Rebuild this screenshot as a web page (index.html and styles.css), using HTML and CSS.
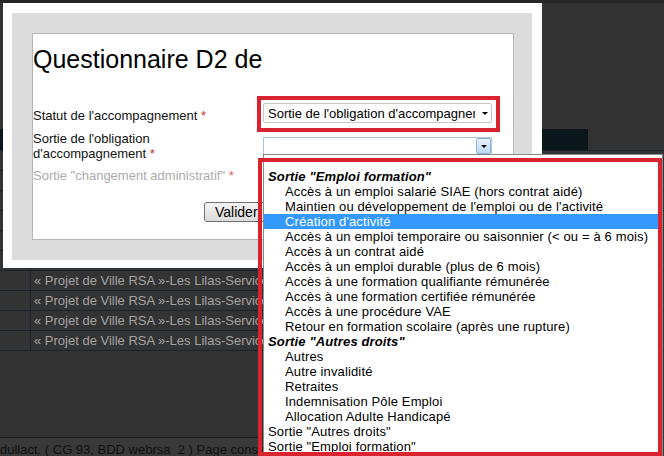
FILE: index.html
```
<!DOCTYPE html>
<html lang="fr">
<head>
<meta charset="utf-8">
<title>Questionnaire D2</title>
<link rel="stylesheet" href="styles.css">
</head>
<body>
<div class="page">
  <div class="page-top"></div>
  <div class="grid">
    <div class="grid-head"><div class="head-cell"></div></div>
    <div class="grid-row"><div class="c1"></div><div class="c2">« Projet de Ville RSA »-Les Lilas-Service RSA</div></div>
    <div class="grid-row"><div class="c1"></div><div class="c2">« Projet de Ville RSA »-Les Lilas-Service RSA</div></div>
    <div class="grid-row"><div class="c1"></div><div class="c2">« Projet de Ville RSA »-Les Lilas-Service RSA</div></div>
    <div class="grid-row"><div class="c1"></div><div class="c2">« Projet de Ville RSA »-Les Lilas-Service RSA</div></div>
    <div class="grid-row"><div class="c1"></div><div class="c2">« Projet de Ville RSA »-Les Lilas-Service RSA</div></div>
    <div class="grid-row"><div class="c1"></div><div class="c2">« Projet de Ville RSA »-Les Lilas-Service RSA</div></div>
    <div class="grid-row"><div class="c1"></div><div class="c2">« Projet de Ville RSA »-Les Lilas-Service RSA</div></div>
    <div class="grid-row"><div class="c1"></div><div class="c2">« Projet de Ville RSA »-Les Lilas-Service RSA</div></div>
    <div class="grid-row"><div class="c1"></div><div class="c2">« Projet de Ville RSA »-Les Lilas-Service RSA</div></div>
    <div class="grid-row"><div class="c1"></div><div class="c2">« Projet de Ville RSA »-Les Lilas-Service RSA</div></div>
  </div>
  <div class="page-gap"></div>
  <div class="foot">dullact. ( CG 93, BDD webrsa_2 ) Page construite en 1,04 secondes.</div>
</div>

<div class="dialog">
  <div class="dialog-frame">
    <div class="panel">
      <h1 class="title">Questionnaire D2 de</h1>
      <div class="field f1">
        <label class="lbl">Statut de l'accompagnement <span class="req">*</span></label>
        <div class="select sel-1"><span class="sel-text">Sortie de l'obligation d'accompagnement</span><span class="caret"></span></div>
      </div>
      <div class="field f2">
        <label class="lbl">Sortie de l'obligation<br>d'accompagnement <span class="req">*</span></label>
        <div class="select sel-2"><span class="sel-btn"><span class="caret"></span></span></div>
      </div>
      <div class="field f3">
        <label class="lbl lbl-off">Sortie "changement administratif" <span class="req-off">*</span></label>
      </div>
      <div class="actions"><button class="btn" type="button">Valider</button></div>
    </div>
  </div>
</div>

<ul class="listbox">
  <li class="blank"></li>
  <li class="grp">Sortie "Emploi formation"</li>
  <li>Accès à un emploi salarié SIAE (hors contrat aidé)</li>
  <li>Maintien ou développement de l'emploi ou de l'activité</li>
  <li class="sel">Création d'activité</li>
  <li>Accès à un emploi temporaire ou saisonnier (&lt; ou = à 6 mois)</li>
  <li>Accès à un contrat aidé</li>
  <li>Accès à un emploi durable (plus de 6 mois)</li>
  <li>Accès à une formation qualifiante rémunérée</li>
  <li>Accès à une formation certifiée rémunérée</li>
  <li>Accès à une procédure VAE</li>
  <li>Retour en formation scolaire (après une rupture)</li>
  <li class="grp">Sortie "Autres droits"</li>
  <li>Autres</li>
  <li>Autre invalidité</li>
  <li>Retraites</li>
  <li>Indemnisation Pôle Emploi</li>
  <li>Allocation Adulte Handicapé</li>
  <li class="plain">Sortie "Autres droits"</li>
  <li class="plain">Sortie "Emploi formation"</li>
</ul>

<div class="mark mark-1"></div>
<div class="mark mark-2"></div>
</body>
</html>
```

FILE: styles.css
```
html, body {
  margin: 0;
  padding: 0;
}
body {
  width: 664px;
  height: 456px;
  overflow: hidden;
  position: relative;
  background: #333333;
  font-family: "Liberation Sans", Arial, sans-serif;
  font-size: 13px;
  color: #000;
}

/* background page */
.page-top {
  height: 129px;
  border-top: 3px solid #262626;
  box-sizing: border-box;
}
.grid {
  border-bottom: 1px solid #17232c;
}
.grid-head {
  display: flex;
  height: 21px;
}
.head-cell {
  width: 588px;
  background: #0c171c;
}
.grid-row {
  display: flex;
  height: 20px;
  border-top: 1px solid #17232c;
  box-sizing: border-box;
}
.c1 {
  width: 30px;
  border-right: 1px solid #17232c;
}
.c2 {
  flex: 1;
  padding-left: 3px;
  line-height: 19px;
  color: #a3a3a3;
  white-space: nowrap;
  overflow: hidden;
}
.page-gap {
  height: 86px;
}
.foot {
  border-top: 1px solid #1e1e1e;
  background: #393939;
  padding-top: 4px;
  height: 30px;
  line-height: 15px;
  color: #111;
  white-space: nowrap;
}

/* dialog */
.dialog {
  position: absolute;
  left: 3px;
  top: 3px;
  width: 539px;
  height: 265px;
  box-sizing: border-box;
  padding: 10px 10px 8px 9px;
  background: #fff;
}
.dialog-frame {
  height: 100%;
  box-sizing: border-box;
  padding: 20px 18px 20px 20px;
  background: #dcdcdc;
}
.panel {
  height: 100%;
  box-sizing: border-box;
  padding-top: 11px;
  background: #fff;
  border: 1px solid #b7b7b7;
}
.title {
  margin: 0;
  font-size: 25px;
  line-height: 29px;
  font-weight: normal;
  color: #000;
}
.field {
  display: grid;
  grid-template-columns: 230px 229px;
  align-items: start;
}
.lbl {
  display: block;
  line-height: 15px;
  color: #111;
}
.req {
  color: #c8302c;
}
.lbl-off {
  color: #ababab;
}
.req-off {
  color: #dd6a6a;
}
.f1 {
  margin-top: 29px;
}
.f1 .lbl {
  padding-top: 4.5px;
}
.f2 {
  margin-top: 8px;
}
.f3 {
  margin-top: 7px;
}
.select {
  box-sizing: border-box;
  background: #fff;
  display: flex;
  align-items: center;
}
.sel-1 {
  height: 20px;
  border: 1px solid #c6c6c6;
  border-radius: 2px;
  padding-left: 4px;
}
.sel-text {
  width: 207px;
  overflow: hidden;
  white-space: nowrap;
  line-height: 15px;
  color: #000;
}
.caret {
  width: 0;
  height: 0;
  border-left: 3.5px solid transparent;
  border-right: 3.5px solid transparent;
  border-top: 3.5px solid #000;
}
.sel-1 .caret {
  margin-left: 7px;
}
.sel-2 {
  height: 18px;
  margin-top: 6px;
  border: 1px solid #a9c3de;
  justify-content: flex-end;
}
.sel-btn {
  width: 15px;
  height: 100%;
  box-sizing: border-box;
  border: 1px solid #8fb3d9;
  border-radius: 2px;
  background: linear-gradient(#e8f2fc, #bdd8f3);
  display: flex;
  align-items: center;
  justify-content: center;
}
.actions {
  margin-top: 19px;
  padding-left: 171px;
}
.btn {
  height: 20px;
  padding: 0 10px;
  margin: 0;
  border: 1px solid #707070;
  border-radius: 3px;
  background: linear-gradient(#f4f4f4, #dcdcdc);
  font-family: "Liberation Sans", Arial, sans-serif;
  font-size: 14px;
  line-height: 18px;
  color: #000;
}

/* open dropdown list */
.listbox {
  position: absolute;
  left: 263px;
  top: 154px;
  width: 400px;
  height: 302px;
  box-sizing: border-box;
  margin: 0;
  padding: 0;
  list-style: none;
  background: #fff;
  border: 1px solid #8a8a8a;
  overflow: hidden;
}
.listbox li {
  height: 15px;
  line-height: 15px;
  padding-left: 21px;
  white-space: nowrap;
  letter-spacing: 0.14px;
  color: #000;
}
.listbox .blank {
  height: 14px;
}
.listbox .grp {
  padding-left: 4px;
  font-weight: bold;
  font-style: italic;
}
.listbox .plain {
  padding-left: 4px;
}
.listbox .sel {
  background: #3399ff;
  color: #fff;
}

/* red annotation frames */
.mark {
  position: absolute;
  box-sizing: border-box;
  border: 4px solid #d9232e;
  pointer-events: none;
}
.mark-1 {
  left: 257px;
  top: 96px;
  width: 243px;
  height: 36px;
}
.mark-2 {
  left: 258px;
  top: 158px;
  width: 404px;
  height: 298px;
}
```
